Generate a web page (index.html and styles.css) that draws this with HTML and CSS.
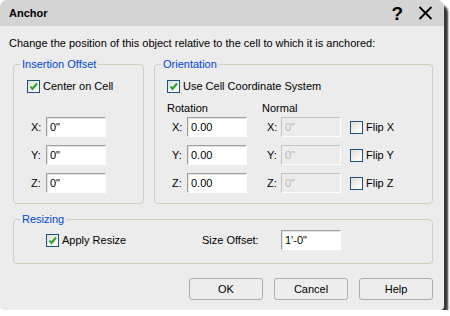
FILE: index.html
```html
<!DOCTYPE html>
<html>
<head>
<meta charset="utf-8">
<link rel="stylesheet" href="styles.css">
</head>
<body>
<div class="window">
  <div class="titlebar">
    <span class="title">Anchor</span>
    <div class="title-btns">
      <span class="help">?</span>
      <svg class="close" width="15" height="14" viewBox="0 0 15 14"><path d="M1.5 1 L13.5 13 M13.5 1 L1.5 13" stroke="#000" stroke-width="1.8" fill="none"/></svg>
    </div>
  </div>
  <div class="content">
    <p class="desc">Change the position of this object relative to the cell to which it is anchored:</p>
    <div class="groups">
      <fieldset class="group group-offset">
        <legend>Insertion Offset</legend>
        <div class="inner inner-offset">
          <label class="check"><span class="box"><svg width="11" height="11" viewBox="0 0 11 11"><path d="M2.5 5.5 L4.5 8 L9 2.5" stroke="#21a121" stroke-width="2" fill="none"/></svg></span>Center on Cell</label>
          <div class="coords coords-offset">
            <span class="lbl">X:</span><input class="field" value='0"'>
            <span class="lbl">Y:</span><input class="field" value='0"'>
            <span class="lbl">Z:</span><input class="field" value='0"'>
          </div>
        </div>
      </fieldset>
      <fieldset class="group group-orient">
        <legend>Orientation</legend>
        <div class="inner inner-orient">
          <label class="check"><span class="box"><svg width="11" height="11" viewBox="0 0 11 11"><path d="M2.5 5.5 L4.5 8 L9 2.5" stroke="#21a121" stroke-width="2" fill="none"/></svg></span>Use Cell Coordinate System</label>
          <div class="heads"><span class="head-rot">Rotation</span><span class="head-norm">Normal</span></div>
          <div class="coords coords-orient">
            <span class="lbl">X:</span><input class="field" value="0.00"><span class="lbl lbl-n">X:</span><input class="field" value='0"' disabled><label class="check flip"><span class="box empty"></span>Flip X</label>
            <span class="lbl">Y:</span><input class="field" value="0.00"><span class="lbl lbl-n">Y:</span><input class="field" value='0"' disabled><label class="check flip"><span class="box empty"></span>Flip Y</label>
            <span class="lbl">Z:</span><input class="field" value="0.00"><span class="lbl lbl-n">Z:</span><input class="field" value='0"' disabled><label class="check flip"><span class="box empty"></span>Flip Z</label>
          </div>
        </div>
      </fieldset>
    </div>
    <fieldset class="group group-resize">
      <legend>Resizing</legend>
      <div class="inner resize-row">
        <label class="check apply"><span class="box"><svg width="11" height="11" viewBox="0 0 11 11"><path d="M2.5 5.5 L4.5 8 L9 2.5" stroke="#21a121" stroke-width="2" fill="none"/></svg></span>Apply Resize</label>
        <span class="size-lbl">Size Offset:</span>
        <input class="field" value="1'-0&quot;">
      </div>
    </fieldset>
    <div class="buttons">
      <button class="btn">OK</button>
      <button class="btn">Cancel</button>
      <button class="btn">Help</button>
    </div>
  </div>
</div>
</body>
</html>
```

FILE: styles.css
```css
html, body {
  margin: 0;
  padding: 0;
  background: #ffffff;
}
body {
  font-family: "Liberation Sans", Arial, sans-serif;
  font-size: 11px;
  line-height: 13px;
  color: #000;
}
.window {
  width: 444px;
  height: 310px;
  box-sizing: border-box;
  background: #ececec;
  border-radius: 7px 7px 4px 4px;
  box-shadow: 4px 5px 2px rgba(0, 0, 0, 0.78);
  overflow: hidden;
  display: flex;
  flex-direction: column;
}
.titlebar {
  height: 26px;
  flex: none;
  background: #d4d4d4;
  display: flex;
  align-items: center;
  justify-content: space-between;
  padding: 0 11px 0 9px;
}
.title {
  font-weight: bold;
  font-size: 11px;
}
.title-btns {
  display: flex;
  align-items: center;
  gap: 15px;
  height: 26px;
}
.help {
  font-weight: bold;
  font-size: 19px;
  line-height: 20px;
  margin-top: 1px;
}
.close {
  display: block;
}
.content {
  padding: 11px 11px 10px 9px;
}
.desc {
  margin: 0 0 8px 0;
}
.groups {
  display: flex;
  gap: 10px;
  margin-left: 4px;
}
.group {
  margin: 0;
  padding: 0;
  border: 1px solid #d0d0bf;
  border-radius: 4px;
  min-width: 0;
}
.group legend {
  margin-left: 6px;
  padding: 0 2px;
  color: #0046d5;
  line-height: 13px;
}
.group-offset {
  width: 131px;
  box-sizing: border-box;
}
.group-orient {
  flex: 1;
}
.inner-offset {
  padding: 9px 0 10px 13px;
}
.inner-orient {
  padding: 9px 0 10px 12px;
}
.check {
  display: flex;
  align-items: center;
  gap: 3px;
  height: 13px;
  white-space: nowrap;
}
.box {
  width: 13px;
  height: 13px;
  box-sizing: border-box;
  border: 1px solid #1c5180;
  background: linear-gradient(135deg, #dcdcd7 0%, #f4f4f2 60%, #ffffff 100%);
  display: flex;
  align-items: center;
  justify-content: center;
  flex: none;
}
.box svg {
  display: block;
}
.coords {
  display: grid;
  row-gap: 8px;
  align-items: center;
}
.coords-offset {
  margin-top: 24px;
  grid-template-columns: 19px 60px;
}
.lbl {
  padding-left: 4px;
}
.coords-orient {
  margin-top: 2px;
  grid-template-columns: 20px 60px 34px 60px auto;
}
.coords-orient .lbl {
  padding-left: 5px;
}
.coords-orient .lbl-n {
  padding-left: 20px;
}
.heads {
  display: flex;
  margin-top: 9px;
  height: 13px;
}
.head-rot {
  width: 95px;
}
.field {
  width: 60px;
  height: 20px;
  box-sizing: border-box;
  margin: 0;
  padding: 0 0 0 3px;
  font: 11px "Liberation Sans", Arial, sans-serif;
  color: #000;
  background: #ffffff;
  border: 1px solid;
  border-color: #a0a0a0 #ffffff #ffffff #a0a0a0;
  box-shadow: inset 1px 1px 0 #e2e2e2;
  outline: none;
}
.field:disabled {
  background: #ececec;
  color: #b8b8b8;
  border-color: #c4c4c4 #ffffff #ffffff #c4c4c4;
  box-shadow: none;
}
.flip {
  margin-left: 9px;
  margin-top: 1px;
}
.group-resize {
  margin: 9px 0 0 4px;
}
.resize-row {
  display: flex;
  align-items: center;
  height: 20px;
  padding: 4px 0 13px 32px;
}
.apply {
  width: 156px;
}
.size-lbl {
  width: 79px;
}
.buttons {
  display: flex;
  justify-content: flex-end;
  gap: 11px;
  margin-top: 14px;
}
.btn {
  width: 74px;
  height: 22px;
  box-sizing: border-box;
  margin: 0;
  padding: 0;
  border: 1px solid #adadad;
  border-radius: 3px;
  background: #ededed;
  font: 11px "Liberation Sans", Arial, sans-serif;
  color: #000;
}
```
